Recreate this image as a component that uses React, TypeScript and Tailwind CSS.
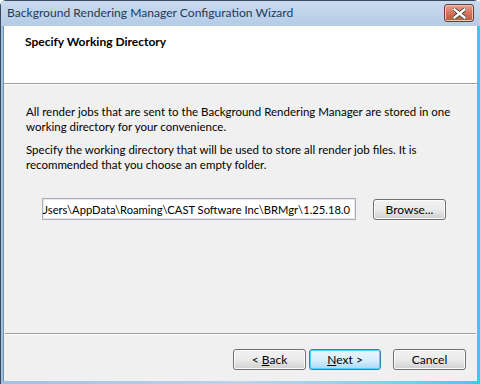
import React from "react";

const font = { fontFamily: 'Lato, "Noto Sans", sans-serif' };

function WinButton({ children, className = "", focused = false }: { children: React.ReactNode; className?: string; focused?: boolean }) {
  return (
    <div
      className={
        "h-[21px] rounded-[3px] border flex items-center justify-center text-[12px] text-black " +
        (focused
          ? "border-[#3c7fb1] bg-gradient-to-b from-[#eaf6fd] via-[#d9f0fc] to-[#a7d9f5] shadow-[inset_0_0_0_1px_#48d8fb]"
          : "border-[#707070] bg-gradient-to-b from-[#f2f2f2] via-[#ebebeb] to-[#cfcfcf] shadow-[inset_0_0_0_1px_#fcfcfc]") +
        " " +
        className
      }
    >
      {children}
    </div>
  );
}

export default function App() {
  return (
    <div className="w-[480px] h-[384px] overflow-hidden" style={font}>
      <div className="w-full h-full flex flex-col border border-[#3a4a5c] border-b-0 border-r-0 rounded-tl-[6px] rounded-tr-[6px] bg-[#b9d1ea]">
        {/* title bar */}
        <div className="h-[25px] flex items-center justify-between pl-[6px] pr-[6px] bg-gradient-to-b from-[#c9dbee] to-[#b4cbe6]">
          <span className="text-[12.1px] text-[#1e395b] leading-none pb-[1px]">Background Rendering Manager Configuration Wizard</span>
          <div className="w-[30px] h-[18px] mt-[-1px] rounded-[3px] border border-[#6d3b36] bg-gradient-to-b from-[#e8a493] via-[#d4725c] to-[#c7543a] flex items-center justify-center shadow-[inset_0_0_0_1px_#f2c3b7]">
            <svg width="13" height="11" viewBox="0 0 13 11">
              <path d="M1.5 1.5 L11.5 9.5 M11.5 1.5 L1.5 9.5" stroke="#3b3b3b" strokeWidth="4" strokeLinecap="square" />
              <path d="M1.5 1.5 L11.5 9.5 M11.5 1.5 L1.5 9.5" stroke="#ffffff" strokeWidth="2.4" strokeLinecap="square" />
            </svg>
          </div>
        </div>
        {/* client area with frame */}
        <div className="flex-1 flex flex-col pl-[2px] pr-[3px] pb-[3px] bg-gradient-to-r from-[#9ec1e6] via-[#bcd4ec] to-[#2ad0f5]">
          <div className="flex-1 flex flex-col bg-[#f0f0f0] border-l border-[#7a8fa8]">
            {/* header */}
            <div className="h-[58px] bg-white border-b border-[#a0a0a0] pl-[21px] pt-[7px]">
              <div className="text-[12px] font-bold text-black">Specify Working Directory</div>
            </div>
            <div className="h-px bg-[#ffffff]" />
            {/* body */}
            <div className="flex-1 flex flex-col pl-[22px] pt-[19px] text-[11.5px] leading-[15px] text-black whitespace-nowrap">
              <p>All render jobs that are sent to the Background Rendering Manager are stored in one<br />working directory for your convenience.</p>
              <p className="mt-[8px]">Specify the working directory that will be used to store all render job files. It is<br />recommended that you choose an empty folder.</p>
              <div className="flex items-center mt-[26px] pl-[16px]">
                <div className="w-[314px] h-[22px] border border-[#abadb3] bg-white flex items-center justify-end overflow-hidden pr-[5px] shadow-[inset_0_0_0_1px_#e3e9ef]">
                  <span className="whitespace-nowrap text-[11.2px] shrink-0">C:\Users\AppData\Roaming\CAST Software Inc\BRMgr\1.25.18.0</span>
                </div>
                <WinButton className="w-[73px] ml-[17px] text-[11.5px]">Browse...</WinButton>
              </div>
            </div>
            {/* bottom separator */}
            <div className="h-[2px] border-t border-[#a0a0a0] border-b border-b-white mx-[1px]" />
            <div className="h-[46px] flex items-start justify-end pr-[11px] pt-[14px]">
              <WinButton className="w-[73px]">&lt; <span className="underline ml-[3px]">B</span>ack</WinButton>
              <WinButton focused className="w-[72px] ml-[3px]"><span className="underline">N</span>ext &gt;</WinButton>
              <WinButton className="w-[73px] ml-[12px]">Cancel</WinButton>
            </div>
          </div>
        </div>
      </div>
    </div>
  );
}
